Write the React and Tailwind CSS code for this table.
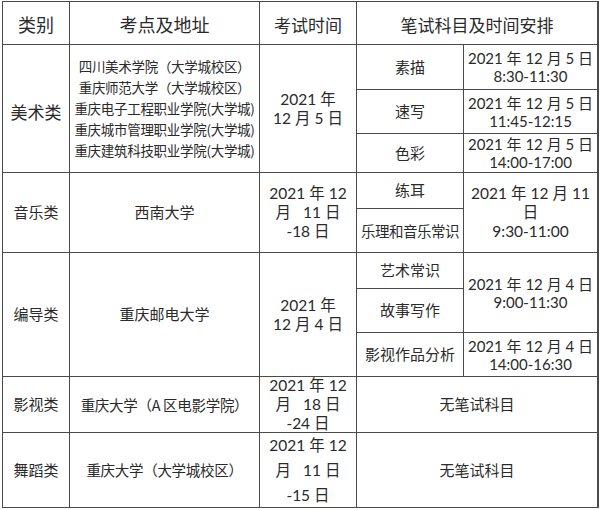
import React from "react";

const font = { fontFamily: '"Noto Sans CJK SC", "Noto Sans", sans-serif' };
const dateFont = { fontFamily: 'Lato, "Noto Sans CJK SC", sans-serif' };

function Cell({ className = "", children, date = false }) {
  return (
    <div
      className={"bg-white flex flex-col items-center justify-center text-center text-[#2a2a2a] " + className}
      style={date ? dateFont : undefined}
    >
      {children}
    </div>
  );
}

function Lines({ lines, className = "" }) {
  return (
    <div className={"flex flex-col items-center " + className}>
      {lines.map((l, i) => (
        <span key={i} className="whitespace-pre">{l}</span>
      ))}
    </div>
  );
}

export default function App() {
  return (
    <div className="w-[600px] h-[510px] bg-white" style={font}>
      <div className="ml-[2px] mt-px w-[597px] grid grid-cols-[66px_189px_96px_106px_133px] grid-rows-[42px_44px_43px_38px_35px_43px_35px_43px_43px_55px_74px] gap-px bg-[#4a4a4a] pl-px pt-px pb-px pr-[2px]">
        {/* header */}
        <Cell className="text-[18px] pt-[3px]">类别</Cell>
        <Cell className="text-[18px] pt-[3px]">考点及地址</Cell>
        <Cell className="text-[17px] pt-[3px]">考试时间</Cell>
        <Cell className="col-span-2 text-[17px] pt-[3px]">笔试科目及时间安排</Cell>

        {/* 美术类 */}
        <Cell className="row-span-3 text-[17px] pt-[6px]">美术类</Cell>
        <Cell className="row-span-3 text-[13.5px] leading-[21px] tracking-[-0.3px]">
          <Lines
            lines={[
              "四川美术学院（大学城校区）",
              "重庆师范大学（大学城校区）",
              "重庆电子工程职业学院(大学城)",
              "重庆城市管理职业学院(大学城)",
              "重庆建筑科技职业学院(大学城)",
            ]}
          />
        </Cell>
        <Cell date className="row-span-3 text-[15.5px] leading-[19px]">
          <Lines lines={["2021 年", "12 月 5 日"]} />
        </Cell>
        <Cell className="text-[15px]">素描</Cell>
        <Cell date className="text-[15px] leading-[18px]">
          <Lines lines={["2021 年 12 月 5 日", "8:30-11:30"]} />
        </Cell>
        <Cell className="text-[15px]">速写</Cell>
        <Cell date className="text-[15px] leading-[18px]">
          <Lines lines={["2021 年 12 月 5 日", "11:45-12:15"]} />
        </Cell>
        <Cell className="text-[15px]">色彩</Cell>
        <Cell date className="text-[15px] leading-[18px]">
          <Lines lines={["2021 年 12 月 5 日", "14:00-17:00"]} />
        </Cell>

        {/* 音乐类 */}
        <Cell className="row-span-2 text-[15px]">音乐类</Cell>
        <Cell className="row-span-2 text-[15px]">西南大学</Cell>
        <Cell date className="row-span-2 text-[15.5px] leading-[19px]">
          <Lines lines={["2021 年 12", "月   11 日", "-18 日"]} />
        </Cell>
        <Cell className="text-[15px]">练耳</Cell>
        <Cell date className="row-span-2 text-[15.5px] leading-[19px]">
          <Lines lines={["2021 年 12 月 11", "日", "9:30-11:00"]} />
        </Cell>
        <Cell className="text-[14.5px] tracking-[-0.5px]">乐理和音乐常识</Cell>

        {/* 编导类 */}
        <Cell className="row-span-3 text-[15px]">编导类</Cell>
        <Cell className="row-span-3 text-[15px]">重庆邮电大学</Cell>
        <Cell date className="row-span-3 text-[15.5px] leading-[19px]">
          <Lines lines={["2021 年", "12 月 4 日"]} />
        </Cell>
        <Cell className="text-[15px]">艺术常识</Cell>
        <Cell date className="row-span-2 text-[15px] leading-[18px]">
          <Lines lines={["2021 年 12 月 4 日", "9:00-11:30"]} />
        </Cell>
        <Cell className="text-[15px]">故事写作</Cell>
        <Cell className="text-[15px]">影视作品分析</Cell>
        <Cell date className="text-[15px] leading-[18px]">
          <Lines lines={["2021 年 12 月 4 日", "14:00-16:30"]} />
        </Cell>

        {/* 影视类 */}
        <Cell className="text-[15px]">影视类</Cell>
        <Cell className="text-[14.5px] tracking-[-0.3px]">重庆大学（A 区电影学院）</Cell>
        <Cell date className="text-[15.5px] leading-[19px]">
          <Lines lines={["2021 年 12", "月   18 日", "-24 日"]} />
        </Cell>
        <Cell className="col-span-2 text-[15px]">无笔试科目</Cell>

        {/* 舞蹈类 */}
        <Cell className="text-[15px]">舞蹈类</Cell>
        <Cell className="text-[14.5px] tracking-[-0.3px]">重庆大学（大学城校区）</Cell>
        <Cell date className="text-[15.5px] leading-[25px]">
          <Lines lines={["2021 年 12", "月   11 日", "-15 日"]} />
        </Cell>
        <Cell className="col-span-2 text-[15px]">无笔试科目</Cell>
      </div>
    </div>
  );
}
